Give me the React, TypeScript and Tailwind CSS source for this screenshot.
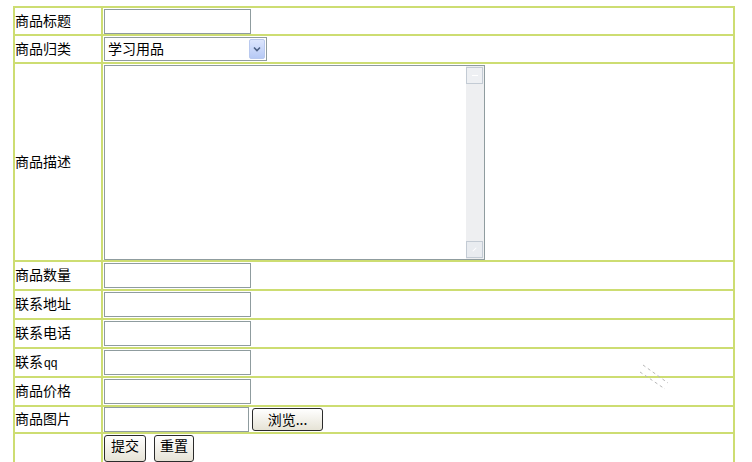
import React from "react";

const font = { fontFamily: '"Noto Sans CJK SC", "Liberation Sans", sans-serif' };

function TextBox({ w = 147 }: { w?: number }) {
  return (
    <div
      className="h-[25px] border border-[#8f9c9f] bg-white"
      style={{ width: w }}
    />
  );
}

function Row({
  label,
  h,
  last,
  children,
}: {
  label: React.ReactNode;
  h: number;
  last?: boolean;
  children?: React.ReactNode;
}) {
  return (
    <div
      className={`flex ${last ? "" : "border-b-2 border-[#cddd72]"}`}
      style={{ height: h + (last ? 0 : 2) }}
    >
      <div className="w-[88px] shrink-0 border-r-2 border-[#cddd72] flex items-center pb-[3px] text-[14px] leading-none text-black">
        {label}
      </div>
      <div className="flex-1 flex items-center pl-[1px]">{children}</div>
    </div>
  );
}

function OldButton({ children, w }: { children: React.ReactNode; w: number }) {
  return (
    <div
      className="h-[23px] rounded-[3px] border border-[#2b2b2b] bg-gradient-to-b from-white to-[#e6e3d6] flex items-center justify-center pb-[2px] text-[14px] leading-none text-black"
      style={{ width: w }}
    >
      {children}
    </div>
  );
}

export default function App() {
  return (
    <div className="relative w-[752px] h-[462px] overflow-hidden bg-white" style={font}>
      <div className="ml-[13px] mt-[6px] w-[722px] border-l-2 border-r-2 border-t-2 border-[#cddd72]">
        <Row label="商品标题" h={26}>
          <TextBox />
        </Row>
        <Row label="商品归类" h={26}>
          <div className="w-[163px] h-[24px] border border-[#8f9c9f] bg-white flex items-center justify-between">
            <span className="pl-[3px] pb-[2px] text-[14px] leading-none">学习用品</span>
            <div className="w-[16px] h-[20px] mr-[1px] rounded-[2px] border border-[#b9c9ef] bg-gradient-to-b from-[#dde6fd] to-[#b6c9f5] flex items-center justify-center">
              <svg width="8" height="6" viewBox="0 0 8 6">
                <path d="M1 1.5 L4 4.5 L7 1.5" stroke="#4d6185" strokeWidth="1.6" fill="none" />
              </svg>
            </div>
          </div>
        </Row>
        <Row label="商品描述" h={196}>
          <div className="w-[381px] h-[195px] border border-[#8f9c9f] bg-white flex justify-end">
            <div className="w-[18px] h-full bg-[#eeeff1] flex flex-col justify-between py-[1px] pr-[1px]">
              <div className="h-[17px] w-[17px] border border-[#c3cbd4] bg-[#eef0f3] flex items-center justify-center">
                <div className="w-[6px] h-[1px] bg-white" />
              </div>
              <div className="h-[17px] w-[17px] border border-[#c3cbd4] bg-[#e9ecf0] flex items-center justify-center">
                <div className="w-[5px] h-[1px] bg-white -rotate-45" />
              </div>
            </div>
          </div>
        </Row>
        <Row label="商品数量" h={27}>
          <TextBox />
        </Row>
        <Row label="联系地址" h={27}>
          <TextBox />
        </Row>
        <Row label="联系电话" h={27}>
          <TextBox />
        </Row>
        <Row
          label={
            <span>
              联系<span className="text-[12px] pl-[1px]" style={{ fontFamily: '"Liberation Sans", sans-serif' }}>qq</span>
            </span>
          }
          h={27}
        >
          <TextBox />
        </Row>
        <Row label="商品价格" h={27}>
          <TextBox />
        </Row>
        <Row label="商品图片" h={25}>
          <div className="flex items-center gap-[3px]">
            <TextBox w={145} />
            <OldButton w={71}>浏览...</OldButton>
          </div>
        </Row>
        <Row label="" h={40} last>
          <div className="self-start pt-[1px] flex gap-[8px]">
            <div className="h-[27px] w-[42px] rounded-[3px] border border-[#2b2b2b] bg-gradient-to-b from-white to-[#e6e3d6] flex items-center justify-center text-[14px] leading-none pb-[8px]">
              提交
            </div>
            <div className="h-[27px] w-[40px] rounded-[3px] border border-[#2b2b2b] bg-gradient-to-b from-white to-[#e6e3d6] flex items-center justify-center text-[14px] leading-none pb-[8px]">
              重置
            </div>
          </div>
        </Row>
      </div>
      <svg className="absolute left-[638px] top-[363px]" width="34" height="28" viewBox="0 0 34 28">
        <path d="M5 2 L30 20" stroke="#b8b8b8" strokeWidth="1" strokeDasharray="3 3" />
        <path d="M2 9 L27 26" stroke="#b8b8b8" strokeWidth="1" strokeDasharray="3 3" />
      </svg>
    </div>
  );
}
